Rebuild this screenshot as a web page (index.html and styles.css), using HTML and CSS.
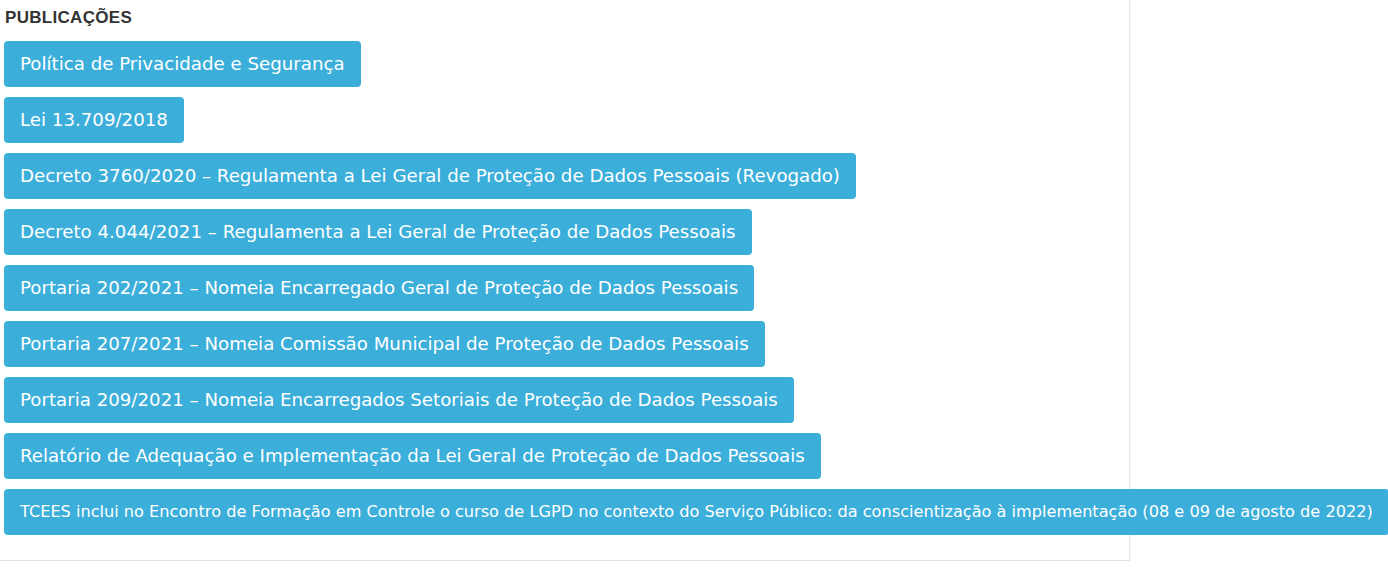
FILE: index.html
```html
<!DOCTYPE html>
<html lang="pt-BR">
<head>
<meta charset="utf-8">
<title>Publicações</title>
<link rel="stylesheet" href="styles.css">
</head>
<body>
<div class="panel">
  <h2 class="title">PUBLICAÇÕES</h2>
  <div class="list">
    <a class="btn" href="#">Política de Privacidade e Segurança</a>
    <a class="btn" href="#">Lei 13.709/2018</a>
    <a class="btn" href="#">Decreto 3760/2020 – Regulamenta a Lei Geral de Proteção de Dados Pessoais (Revogado)</a>
    <a class="btn" href="#">Decreto 4.044/2021 – Regulamenta a Lei Geral de Proteção de Dados Pessoais</a>
    <a class="btn" href="#">Portaria 202/2021 – Nomeia Encarregado Geral de Proteção de Dados Pessoais</a>
    <a class="btn" href="#">Portaria 207/2021 – Nomeia Comissão Municipal de Proteção de Dados Pessoais</a>
    <a class="btn" href="#">Portaria 209/2021 – Nomeia Encarregados Setoriais de Proteção de Dados Pessoais</a>
    <a class="btn" href="#">Relatório de Adequação e Implementação da Lei Geral de Proteção de Dados Pessoais</a>
    <a class="btn btn-small" href="#">TCEES inclui no Encontro de Formação em Controle o curso de LGPD no contexto do Serviço Público: da conscientização à implementação (08 e 09 de agosto de 2022)</a>
  </div>
</div>
</body>
</html>
```
FILE: styles.css
```css
html, body {
  margin: 0;
  padding: 0;
  background: #fff;
}
.panel {
  width: 1130px;
  box-sizing: border-box;
  padding: 8px 0 25px 4px;
  border-right: 1px solid #e6e6e6;
  border-bottom: 1px solid #e0e0e0;
  box-shadow: 1px 1px 1px rgba(0,0,0,0.03);
}
.title {
  margin: 0 0 13px 1px;
  font-family: "Liberation Sans", Arial, sans-serif;
  font-weight: bold;
  font-size: 17px;
  letter-spacing: 0.3px;
  line-height: 20px;
  color: #333;
}
.list {
  display: flex;
  flex-direction: column;
  align-items: flex-start;
  gap: 10px;
}
.btn {
  display: block;
  white-space: nowrap;
  background: #3caeda;
  color: #fff;
  text-decoration: none;
  font-family: "DejaVu Sans", Verdana, sans-serif;
  font-size: 18.2px;
  line-height: 22px;
  padding: 12px 16px;
  border-radius: 4px;
}
.btn-small {
  font-size: 16.15px;
}
```
